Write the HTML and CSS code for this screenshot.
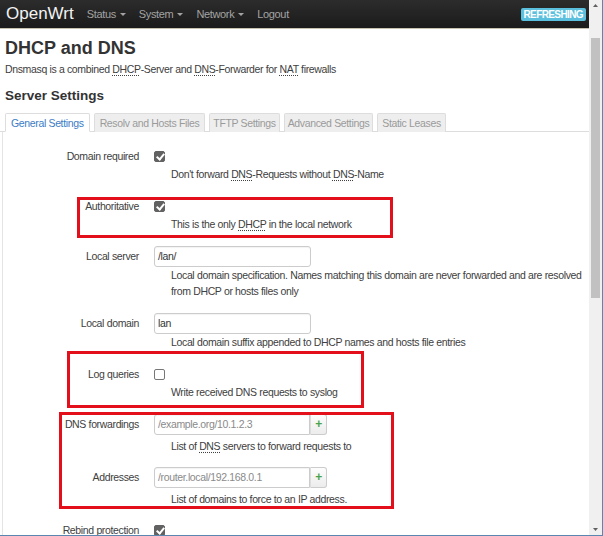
FILE: index.html
```html
<!DOCTYPE html>
<html>
<head>
<meta charset="utf-8">
<link rel="stylesheet" href="styles.css">
</head>
<body>
<div class="window">
  <div class="page">
    <header class="navbar">
      <span class="brand">OpenWrt</span>
      <nav class="menu">
        <span class="menu-item">Status <span class="caret"></span></span>
        <span class="menu-item">System <span class="caret"></span></span>
        <span class="menu-item">Network <span class="caret"></span></span>
        <span class="menu-item">Logout</span>
      </nav>
      <span class="badge">REFRESHING</span>
    </header>

    <main class="content">
      <h2 class="title">DHCP and DNS</h2>
      <p class="subtitle">Dnsmasq is a combined <abbr>DHCP</abbr>-Server and <abbr>DNS</abbr>-Forwarder for <abbr>NAT</abbr> firewalls</p>
      <h3 class="section">Server Settings</h3>
      <ul class="tabs">
        <li class="tab active">General Settings</li>
        <li class="tab">Resolv and Hosts Files</li>
        <li class="tab tab-tight">TFTP Settings</li>
        <li class="tab tab-tight">Advanced Settings</li>
        <li class="tab tab-mid">Static Leases</li>
      </ul>

      <div class="panel">
        <div class="row">
          <label class="label label-cb">Domain required</label>
          <div class="field">
            <div class="ctrl-cb"><span class="cb checked"></span></div>
            <div class="desc">Don't forward <abbr>DNS</abbr>-Requests without <abbr>DNS</abbr>-Name</div>
          </div>
        </div>
        <div class="row">
          <label class="label label-cb">Authoritative</label>
          <div class="field">
            <div class="ctrl-cb"><span class="cb checked"></span></div>
            <div class="desc">This is the only <abbr>DHCP</abbr> in the local network</div>
          </div>
        </div>
        <div class="row">
          <label class="label label-in">Local server</label>
          <div class="field">
            <div class="input">/lan/</div>
            <div class="desc nowrap">Local domain specification. Names matching this domain are never forwarded and are resolved<br>from DHCP or hosts files only</div>
          </div>
        </div>
        <div class="row">
          <label class="label label-in">Local domain</label>
          <div class="field">
            <div class="input">lan</div>
            <div class="desc nowrap">Local domain suffix appended to DHCP names and hosts file entries</div>
          </div>
        </div>
        <div class="row">
          <label class="label label-cb">Log queries</label>
          <div class="field">
            <div class="ctrl-cb"><span class="cb"></span></div>
            <div class="desc">Write received DNS requests to syslog</div>
          </div>
        </div>
        <div class="row row-dyn">
          <label class="label label-in">DNS forwardings</label>
          <div class="field">
            <div class="dyn"><div class="input placeholder">/example.org/10.1.2.3</div><span class="add">+</span></div>
            <div class="desc desc-dyn">List of <abbr>DNS</abbr> servers to forward requests to</div>
          </div>
        </div>
        <div class="row row-dyn">
          <label class="label label-in">Addresses</label>
          <div class="field">
            <div class="dyn"><div class="input placeholder">/router.local/192.168.0.1</div><span class="add">+</span></div>
            <div class="desc desc-dyn">List of domains to force to an IP address.</div>
          </div>
        </div>
        <div class="row">
          <label class="label label-cb">Rebind protection</label>
          <div class="field">
            <div class="ctrl-cb"><span class="cb checked"></span></div>
          </div>
        </div>
      </div>
    </main>

    <div class="mark mark-auth"></div>
    <div class="mark mark-log"></div>
    <div class="mark mark-dns"></div>
  </div>

  <div class="scrollbar">
    <svg class="arrow" width="13" height="12" viewBox="0 0 13 12"><path d="M4 7 L6.5 4 L9 7 Z" fill="#606060"/></svg>
    <div class="track"><div class="thumb"></div></div>
    <svg class="arrow" width="13" height="12" viewBox="0 0 13 12"><path d="M4 5 L6.5 8 L9 5 Z" fill="#606060"/></svg>
  </div>
</div>
</body>
</html>
```

FILE: styles.css
```css
* { box-sizing: border-box; }
html, body {
  margin: 0;
  padding: 0;
  width: 603px;
  height: 536px;
  overflow: hidden;
  background: #fff;
}
body {
  font-family: "Liberation Sans", Arial, sans-serif;
  font-size: 10.5px;
  letter-spacing: -0.35px;
  color: #404040;
}
.window {
  display: flex;
  width: 603px;
  height: 536px;
  border-right: 1px solid #5a86b0;
  border-bottom: 1px solid #5a86b0;
}
.page {
  position: relative;
  width: 589px;
  height: 535px;
  overflow: hidden;
}
.navbar {
  display: flex;
  align-items: center;
  height: 29px;
  background: linear-gradient(to bottom, #2c2c2c, #1b1b1b);
  border-bottom: 1px solid #c8c2b0;
  padding: 0 3px 0 6px;
}
.brand {
  color: #f2f2f2;
  font-size: 17px;
  letter-spacing: 0;
  margin-right: 13px;
}
.menu {
  display: flex;
  flex: 1;
}
.menu-item {
  color: #a3a3a3;
  font-size: 11px;
  margin-right: 13px;
  display: flex;
  align-items: center;
}
.caret {
  display: inline-block;
  width: 0;
  height: 0;
  margin-left: 4px;
  border-left: 3px solid transparent;
  border-right: 3px solid transparent;
  border-top: 3px solid #a3a3a3;
}
.badge {
  background: #5bc0de;
  color: #fff;
  font-weight: bold;
  font-size: 10px;
  line-height: 12px;
  padding: 1px 3px 0 2px;
  border-radius: 2px;
  letter-spacing: -0.6px;
}
.content {
  padding: 0 0 0 5px;
}
.title {
  margin: 9px 0 0;
  font-size: 18px;
  line-height: 20px;
  font-weight: bold;
  letter-spacing: 0;
  color: #333;
}
.subtitle {
  margin: 3px 0 0;
  line-height: 16px;
  color: #404040;
}
abbr {
  text-decoration: underline dotted;
  text-underline-offset: 2px;
}
.section {
  margin: 10px 0 0;
  font-size: 13.5px;
  line-height: 18px;
  font-weight: bold;
  letter-spacing: 0;
  color: #333;
}
.tabs {
  list-style: none;
  margin: 8px 0 0 -5px;
  padding: 0 0 0 5px;
  display: flex;
  gap: 4px;
  border-bottom: 1px solid #ddd;
}
.tab {
  height: 19px;
  line-height: 16px;
  padding: 1px 5px 0;
  border: 1px solid #ddd;
  border-bottom: none;
  background: #eee;
  color: #9a9a9a;
  margin-bottom: -1px;
  border-radius: 2px 2px 0 0;
}
.tab-tight { padding: 1px 3px 0; }
.tab-mid { padding: 1px 4px 0; }
.tab.active {
  background: #fff;
  color: #3b7cc6;
  border-bottom: 1px solid #fff;
}
.panel {
  margin-left: -3px;
  border-left: 1px solid #e4e4e4;
  padding-top: 14px;
  display: flex;
  flex-direction: column;
  gap: 14px;
}
.row {
  display: flex;
  gap: 15px;
}
.row-dyn { margin-bottom: -1px; }
.label {
  width: 136px;
  text-align: right;
  color: #404040;
  flex: none;
}
.label-cb { line-height: 20px; }
.label-in { line-height: 21px; }
.field {
  display: flex;
  flex-direction: column;
}
.ctrl-cb {
  height: 20px;
  display: flex;
  align-items: center;
}
.cb {
  width: 11px;
  height: 11px;
  border-radius: 2px;
  border: 1px solid #777;
  background: #fff;
  position: relative;
}
.cb.checked {
  background: #626262;
  border-color: #626262;
}
.cb.checked::after {
  content: "";
  position: absolute;
  left: 3px;
  top: 0px;
  width: 3px;
  height: 6px;
  border-right: 2px solid #fff;
  border-bottom: 2px solid #fff;
  transform: rotate(40deg);
}
.input {
  width: 157px;
  height: 21px;
  border: 1px solid #ccc;
  border-radius: 3px;
  padding: 0 3px;
  line-height: 19px;
  color: #333;
  box-shadow: inset 0 1px 1px rgba(0,0,0,0.05);
}
.input.placeholder { color: #8a8a8a; }
.dyn {
  display: flex;
}
.dyn .input {
  width: 156px;
  border-radius: 3px 0 0 3px;
}
.add {
  width: 17px;
  height: 21px;
  border: 1px solid #ccc;
  border-left: 1px solid #ddd;
  border-radius: 0 3px 3px 0;
  background: linear-gradient(to bottom, #fdfdfd, #ececec);
  color: #4aa24a;
  font-weight: bold;
  text-align: center;
  line-height: 18px;
  font-size: 12px;
}
.desc {
  margin-left: 17px;
  line-height: 16px;
  color: #404040;
}
.nowrap { white-space: nowrap; }
.desc-dyn { margin-top: 3px; }
.mark {
  position: absolute;
  border: 3px solid #e3101c;
}
.mark-auth { left: 77px; top: 197px; width: 316px; height: 41px; }
.mark-log { left: 67px; top: 351px; width: 297px; height: 57px; }
.mark-dns { left: 59px; top: 412px; width: 335px; height: 97px; }
.scrollbar {
  width: 13px;
  height: 535px;
  background: #f0f0f0;
  display: flex;
  flex-direction: column;
}
.arrow { flex: none; display: block; }
.track {
  flex: 1;
  padding: 26px 2px 0 2px;
}
.thumb {
  width: 9px;
  height: 260px;
  background: #c1c1c1;
}
```
